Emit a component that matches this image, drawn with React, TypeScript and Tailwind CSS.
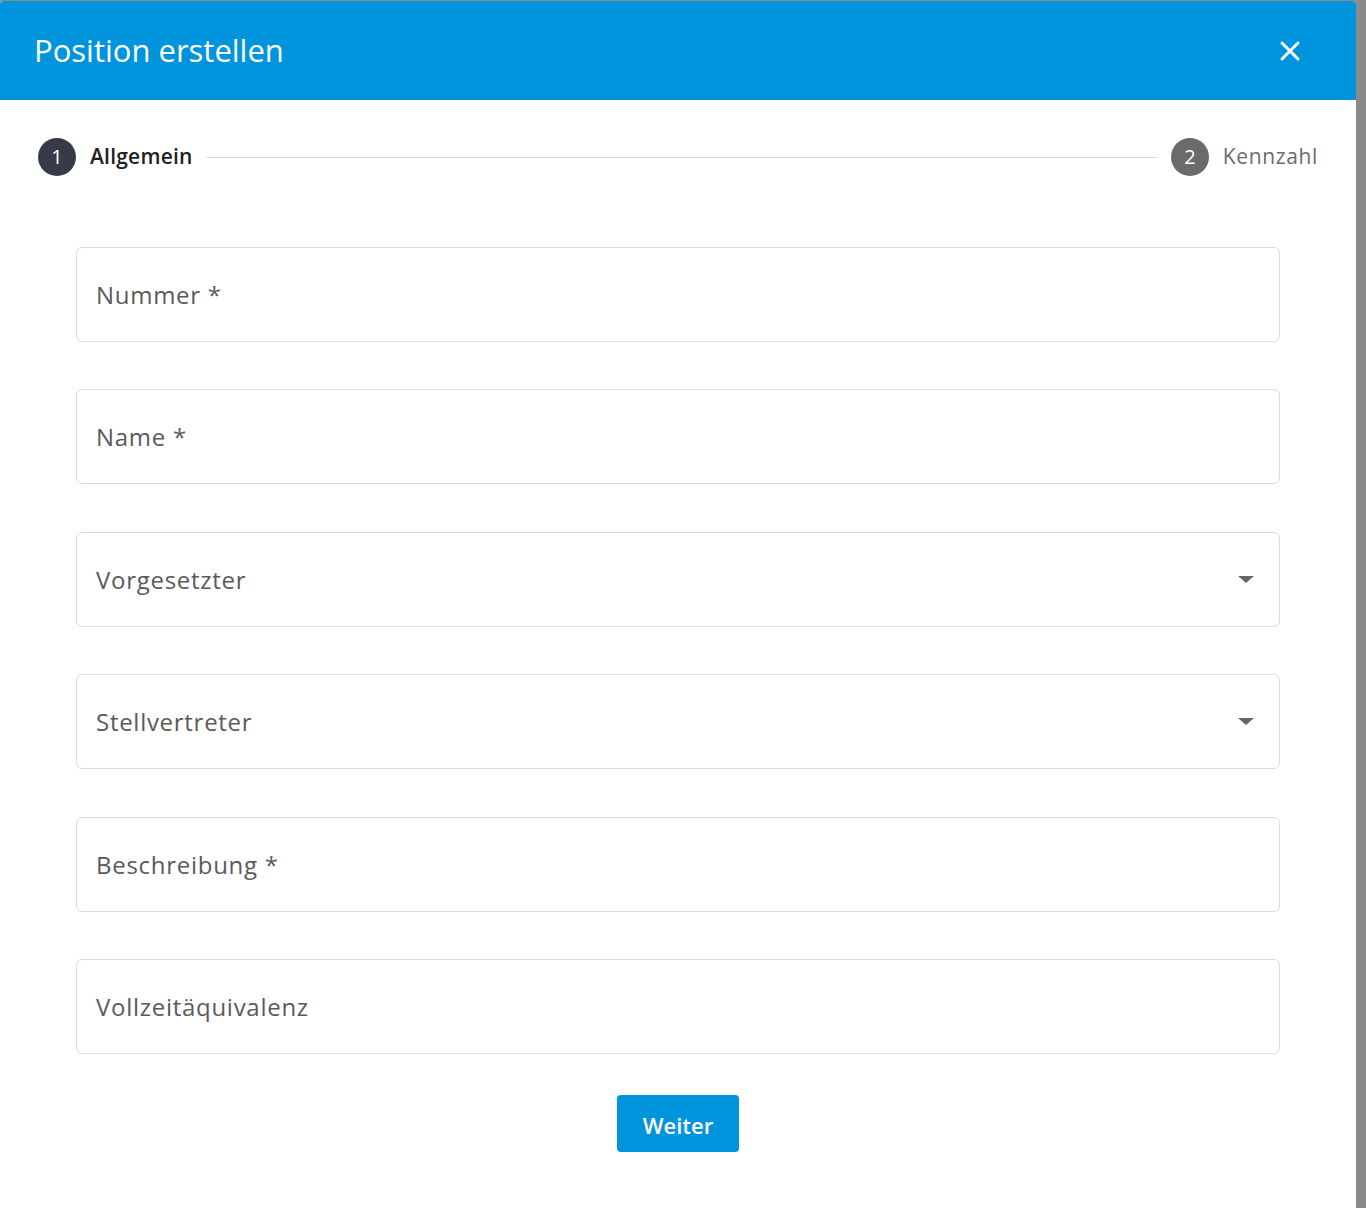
import { X } from "lucide-react";

const fields = [
  { label: "Nummer *", select: false },
  { label: "Name *", select: false },
  { label: "Vorgesetzter", select: true },
  { label: "Stellvertreter", select: true },
  { label: "Beschreibung *", select: false },
  { label: "Vollzeitäquivalenz", select: false },
];

function Field({ label, select }: { label: string; select: boolean }) {
  return (
    <div className="h-[95px] rounded-md border border-[#dcdcdc] flex items-center justify-between pl-[19px] pr-[25px]">
      <span className="text-[24px] tracking-[0.03em] text-[#5a5a5a] pt-px">{label}</span>
      {select && (
        <span className="w-0 h-0 border-l-[8px] border-r-[8px] border-t-[7px] border-l-transparent border-r-transparent border-t-[#666]" />
      )}
    </div>
  );
}

function App() {
  return (
    <div
      className="min-h-[1208px] bg-[#8a8a8a] pt-px pr-[10px]"
      style={{ fontFamily: "'Open Sans', Lato, sans-serif" }}
    >
      <div className="bg-white rounded-t min-h-[1207px]">
        <div className="h-[99px] bg-[#0094dd] rounded-t flex items-center justify-between pl-[34px] pr-[50px]">
          <h1 className="text-[31px] text-white">Position erstellen</h1>
          <X className="w-[32px] h-[32px] text-white" strokeWidth={2.2} />
        </div>

        <div className="flex items-center px-[38px] pt-[38px]">
          <span className="w-[38px] h-[38px] rounded-full bg-[#373a47] text-white text-[20px] flex items-center justify-center">
            1
          </span>
          <span className="ml-[14px] text-[21px] tracking-[0.01em] font-semibold text-[#222]">
            Allgemein
          </span>
          <div className="flex-1 h-px bg-[#dadada] mx-[13px]" />
          <span className="w-[38px] h-[38px] rounded-full bg-[#6b6b6b] text-white text-[20px] flex items-center justify-center">
            2
          </span>
          <span className="ml-[14px] text-[21px] tracking-[0.03em] text-[#6b6b6b]">Kennzahl</span>
        </div>

        <div className="px-[76px] pt-[71px] flex flex-col gap-[47.4px]">
          {fields.map((f) => (
            <Field key={f.label} label={f.label} select={f.select} />
          ))}
        </div>

        <div className="flex justify-center pt-[41px]">
          <button className="w-[122px] h-[57px] rounded bg-[#0094dd] text-white text-[22px] font-semibold pt-[4px]">
            Weiter
          </button>
        </div>
      </div>
    </div>
  );
}

export default App;
